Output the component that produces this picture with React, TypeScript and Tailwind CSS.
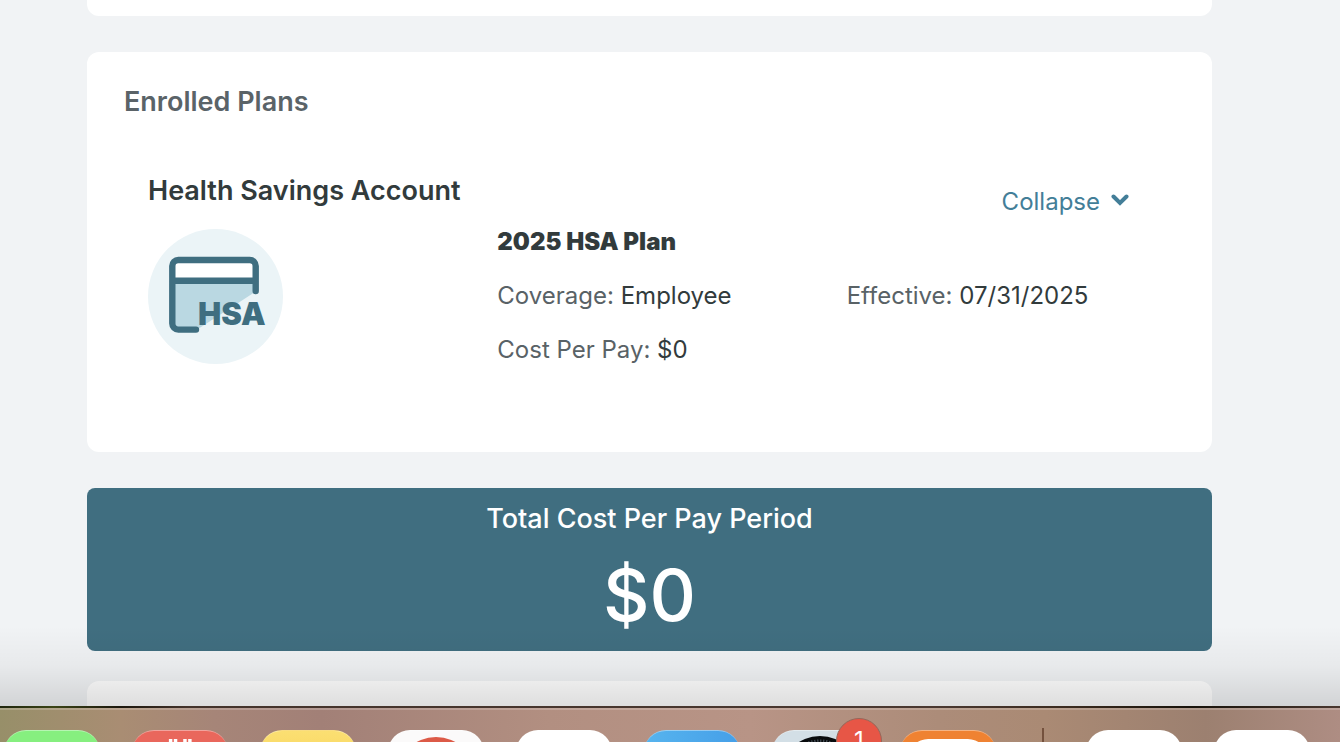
import React, { useState } from 'react';

const PLAN = {
  type: 'Health Savings Account',
  name: '2025 HSA Plan',
  coverage: 'Employee',
  effective: '07/31/2025',
  cost: '$0',
};

function HsaIcon() {
  return (
    <svg viewBox="0 0 135 135" className="mt-[5px] w-[135px] h-[135px]" role="img" aria-label="HSA">
      <circle cx="67.5" cy="67.5" r="67.5" fill="#ebf4f7" />
      <path d="M25 52H107V63L50 100H25Z" fill="#bad8e2" />
      <path d="M25 50V36a5 5 0 0 1 5-5h72a5 5 0 0 1 5 5v14Z" fill="#fff" />
      <path
        d="M107.7 62V37a6 6 0 0 0-6-6H30.3a6 6 0 0 0-6 6v57.6a6 6 0 0 0 6 6H48M24.3 51.7h83.4"
        fill="none"
        stroke="#3f6e80"
        strokeWidth="6.4"
        strokeLinecap="round"
      />
      <text x="50" y="96" fontSize="31" fontWeight="900" fill="#3f6e80" fontFamily="Inter, sans-serif">
        HSA
      </text>
    </svg>
  );
}

function Field({ label, value }: { label: string; value: string }) {
  return (
    <p>
      <span className="text-[#596266]">{label}:</span> {value}
    </p>
  );
}

function EnrolledPlans() {
  const [open, setOpen] = useState(true);

  return (
    <section className="bg-white rounded-xl pt-8 pb-[84px] pl-[37px] pr-4">
      <h2 className="text-[27px] leading-9 font-semibold text-[#5a6368]">Enrolled Plans</h2>

      <div className="pl-6 mt-[53px]">
        <div className="flex items-start justify-between pr-[67px]">
          <h3 className="text-[27px] leading-9 font-semibold text-[#323b3c]">{PLAN.type}</h3>
          <button
            type="button"
            aria-expanded={open}
            onClick={() => setOpen(!open)}
            className="flex items-center gap-[11px] pt-[11px] text-2xl leading-9 text-[#437e98]"
          >
            Collapse
            <svg viewBox="0 0 18 12" className="mb-1 w-[18px] h-3" aria-hidden="true">
              <path d="M2.5 2.5 9 9l6.5-6.5" fill="none" stroke="currentColor" strokeWidth="4" strokeLinecap="round" />
            </svg>
          </button>
        </div>

        {open && (
          <div className="grid grid-cols-3 pt-1 text-2xl leading-9 text-[#323b3c]">
            <HsaIcon />
            <div className="space-y-[18px]">
              <h4 className="font-black">{PLAN.name}</h4>
              <Field label="Coverage" value={PLAN.coverage} />
              <Field label="Cost Per Pay" value={PLAN.cost} />
            </div>
            <div className="pt-[54px]">
              <Field label="Effective" value={PLAN.effective} />
            </div>
          </div>
        )}
      </div>
    </section>
  );
}

function TotalCost() {
  return (
    <section className="bg-[#406e80] rounded-lg pt-[13px] pb-2 text-center text-white">
      <h2 className="text-[27px] leading-9 font-medium">Total Cost Per Pay Period</h2>
      <p className="mt-2.5 text-7xl leading-[96px] font-medium">{PLAN.cost}</p>
    </section>
  );
}

const tile = 'w-24 h-24 shrink-0 rounded-[22px] overflow-hidden border-t border-white/40';

function Dock() {
  return (
    <footer className="relative h-9 shrink-0">
      <div className="h-0.5 bg-[linear-gradient(90deg,#20260e,#3b4416_4%,#1b160c_9%,#44332b_14%,#4a3830_70%,#3a2a1e_80%,#17120a_89%,#4a3830)]" />
      <div className="h-[34px] overflow-hidden border-t-2 border-white/20 bg-[linear-gradient(90deg,#978f69,#a98d73_9%,#a68578_16%,#a28077_24%,#b28f81_41%,#b89486_56%,#ac8c79_70%,#aa8a74_78%,#9c8070_90%,#ae8d83)]">
        <div className="flex gap-8 pl-1 pt-5">
          <div className={`${tile} bg-[#86ef7f]`} />
          <div className={`${tile} bg-[#e9675c]`}>
            <svg viewBox="0 0 96 96" className="w-full h-full" aria-hidden="true">
              <path d="M38.5 8v10M43.5 8v10M53 8v10M58 8v10" stroke="#fff" strokeWidth="3.5" />
            </svg>
          </div>
          <div className={`${tile} bg-linear-to-b from-[#fbdf72] to-[#f5c62f]`} />
          <div className={`${tile} bg-[#fbfafa]`}>
            <svg viewBox="0 0 96 96" className="w-full h-full" aria-hidden="true">
              <circle cx="48" cy="46" r="40" fill="#dc5a47" />
            </svg>
          </div>
          <div className={`${tile} bg-white`} />
          <div className={`${tile} bg-linear-to-r from-[#57b4ee] to-[#459fe8]`} />
          <div className={`${tile} bg-[#d3dfe6]`}>
            <svg viewBox="0 0 96 96" className="w-full h-full" aria-hidden="true">
              <circle cx="48" cy="45" r="40" fill="#080b0d" />
              <circle cx="48" cy="45" r="35" fill="none" stroke="#55606a" strokeWidth="3" strokeDasharray="1 2" />
            </svg>
          </div>
          <div className={`${tile} bg-[#ef8232]`}>
            <svg viewBox="0 0 96 96" className="w-full h-full" aria-hidden="true">
              <rect x="8" y="8" width="80" height="80" rx="20" fill="#fff" />
            </svg>
          </div>
          <div className="-mt-0.5 ml-[14px] mr-[10px] w-0.5 h-24 shrink-0 bg-[#74513d]" />
          <div className={`${tile} bg-white`} />
          <div className={`${tile} bg-white`} />
        </div>
      </div>

      {/* Notification badge */}
      <div className="absolute left-[836px] top-3 bottom-0 w-[46px] overflow-hidden">
        <span className="flex h-[46px] w-[46px] items-center justify-center rounded-full border border-[#94675a] bg-[#e75646] text-2xl text-white">
          1
        </span>
      </div>
    </footer>
  );
}

export default function App() {
  return (
    <div className="flex h-screen flex-col overflow-hidden font-['Inter',sans-serif]">
      <main className="relative flex-1 min-h-0 overflow-hidden bg-[#f1f3f5] pl-[87px] pr-32">
        <div className="h-4 bg-white rounded-b-xl mb-9" />
        <EnrolledPlans />
        <div className="mt-9">
          <TotalCost />
        </div>
        <div className="mt-[30px] h-24 bg-white rounded-t-xl" />
        <div className="pointer-events-none absolute inset-x-0 bottom-0 h-20 bg-linear-to-b from-transparent via-black/4 to-black/13" />
      </main>
      <Dock />
    </div>
  );
}
